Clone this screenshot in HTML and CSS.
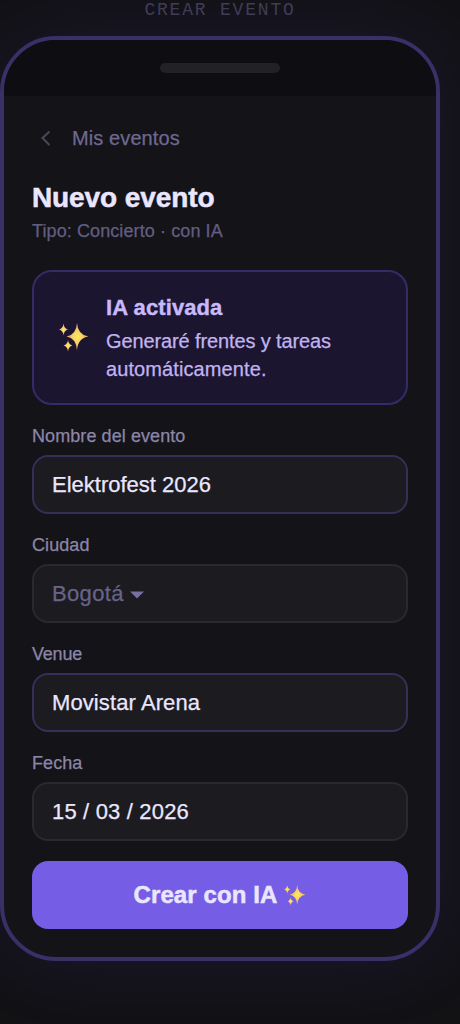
FILE: index.html
```html
<!DOCTYPE html>
<html lang="es">
<head>
<meta charset="utf-8">
<title>Crear evento</title>
<link rel="stylesheet" href="styles.css">
</head>
<body>
<svg class="defs" width="0" height="0" aria-hidden="true">
  <defs>
    <radialGradient id="gold"><stop offset="0" stop-color="#ffee4e"/><stop offset=".35" stop-color="#fbd668"/><stop offset="1" stop-color="#e0a070"/></radialGradient>
    <symbol id="sparkles" viewBox="0 0 30 30">
      <path fill="url(#gold)" d="M18 1Q18.800 13 29.500 14.500Q18.800 16 18 28.500Q17.200 16 7.500 14.500Q17.200 13 18 1Z"/>
      <path fill="url(#gold)" d="M4.500 1.500Q5 6.400 9 7.500Q5 8.600 4.500 13.500Q4 8.600 0 7.500Q4 6.400 4.500 1.500Z"/>
      <path fill="url(#gold)" d="M9 18Q9.500 22.400 13.500 23.500Q9.500 24.600 9 29.500Q8.500 24.600 4.500 23.500Q8.500 22.400 9 18Z"/>
    </symbol>
  </defs>
</svg>
<div class="caption">CREAR EVENTO</div>
<main class="phone">
  <div class="notch"><span class="speaker"></span></div>
  <div class="screen">
    <nav class="back">
      <svg class="chevron" viewBox="0 0 28 28"><path d="M17.500 7.500L10.500 14L17.500 21"/></svg>
      <span class="back-text">Mis eventos</span>
    </nav>
    <h1 class="title">Nuevo evento</h1>
    <p class="subtitle">Tipo: Concierto · con IA</p>
    <section class="banner">
      <svg class="banner-icon"><use href="#sparkles"/></svg>
      <div class="banner-body">
        <div class="banner-title">IA activada</div>
        <div class="banner-text"><span class="banner-line">Generaré frentes y tareas</span><br>automáticamente.</div>
      </div>
    </section>
    <div class="label">Nombre del evento</div>
    <div class="field filled"><span>Elektrofest 2026</span></div>
    <div class="label">Ciudad</div>
    <div class="field muted"><span class="v-city">Bogotá</span><svg class="caret" viewBox="0 0 14 8"><path d="M0 .5H14L7 7.500Z"/></svg></div>
    <div class="label label-venue">Venue</div>
    <div class="field filled"><span class="v-venue">Movistar Arena</span></div>
    <div class="label">Fecha</div>
    <div class="field"><span class="v-date">15 / 03 / 2026</span></div>
    <button class="submit"><span>Crear con IA</span><svg class="submit-icon"><use href="#sparkles"/></svg></button>
  </div>
</main>
</body>
</html>
```
FILE: styles.css
```css
* { box-sizing: border-box; }
body {
  margin: 0;
  height: 1024px;
  overflow: hidden;
  background: #121215;
  font-family: "Liberation Sans", Arial, sans-serif;
  -webkit-text-stroke: .25px currentColor;
}
.defs { display: block; }
.caption {
  width: 440px;
  height: 36px;
  line-height: 20px;
  text-align: center;
  font-family: "Courier New", "Liberation Mono", monospace;
  font-size: 18px;
  letter-spacing: 1.8px;
  color: #403d52;
  -webkit-text-stroke: 0;
}
.phone {
  position: relative;
  width: 440px;
  height: 925px;
  border: 4px solid #3a2f66;
  border-radius: 56px;
  overflow: hidden;
  background: #141318;
  box-shadow: 0 0 80px rgba(108, 71, 255, .1);
}
.notch {
  height: 56px;
  display: flex;
  align-items: center;
  justify-content: center;
  background: #0e0d11;
}
.speaker { width: 120px; height: 10px; border-radius: 5px; background: #222126; }
.screen { padding: 28px; }
.back { display: flex; align-items: center; gap: 12px; height: 28px; font-size: 20px; letter-spacing: .1px; color: #6d6990; }
.chevron { width: 28px; height: 28px; fill: none; stroke: #4a4858; stroke-width: 2; }
.title {
  margin: 28px 0 0;
  font-size: 28px;
  line-height: 35px;
  font-weight: 700;
  letter-spacing: -.1px;
  color: #ebe6ff;
  -webkit-text-stroke: .5px currentColor;
}
.subtitle { margin: 5px 0 28px; font-size: 18px; line-height: 22px; letter-spacing: .1px; color: #625e82; }
.banner {
  display: flex;
  align-items: center;
  gap: 16px;
  height: 135px;
  padding: 0 24px;
  border: 2px solid #362b66;
  border-radius: 20px;
  background: #1b1530;
}
.banner-icon { width: 32px; height: 30px; margin-bottom: 2px; }
.banner-title {
  font-size: 22px;
  font-weight: 700;
  line-height: 30px;
  margin-bottom: 4px;
  letter-spacing: .1px;
  color: #c8b9fb;
  -webkit-text-stroke: .4px currentColor;
}
.banner-text { font-size: 20px; line-height: 28px; letter-spacing: .1px; color: #c1b3f0; white-space: nowrap; }
.banner-line { letter-spacing: -.12px; }
.label { margin: 20px 0 8px; font-size: 18px; line-height: 22px; letter-spacing: .08px; color: #8b86aa; }
.label-venue { letter-spacing: -.2px; }
.field {
  display: flex;
  align-items: center;
  height: 59px;
  padding: 0 18px;
  border: 2px solid #29292e;
  border-radius: 16px;
  background: #1b1b20;
  font-size: 22px;
  color: #ebe6ff;
}
.filled { border-color: #362f58; }
.muted { color: #68638b; }
.v-city { letter-spacing: .35px; }
.v-venue { letter-spacing: .1px; }
.v-date { letter-spacing: .17px; }
.caret { width: 14px; height: 8px; margin: 2px 0 0 6px; fill: #7771a0; }
.submit {
  display: flex;
  align-items: center;
  justify-content: center;
  gap: 7px;
  width: 100%;
  height: 68px;
  margin-top: 20px;
  padding: 0;
  border: 0;
  border-radius: 16px;
  background: #765de6;
  font: 700 24px "Liberation Sans", Arial, sans-serif;
  letter-spacing: .1px;
  color: #ebe6ff;
  -webkit-text-stroke: .5px currentColor;
}
.submit-icon { width: 22px; height: 22px; }
```
